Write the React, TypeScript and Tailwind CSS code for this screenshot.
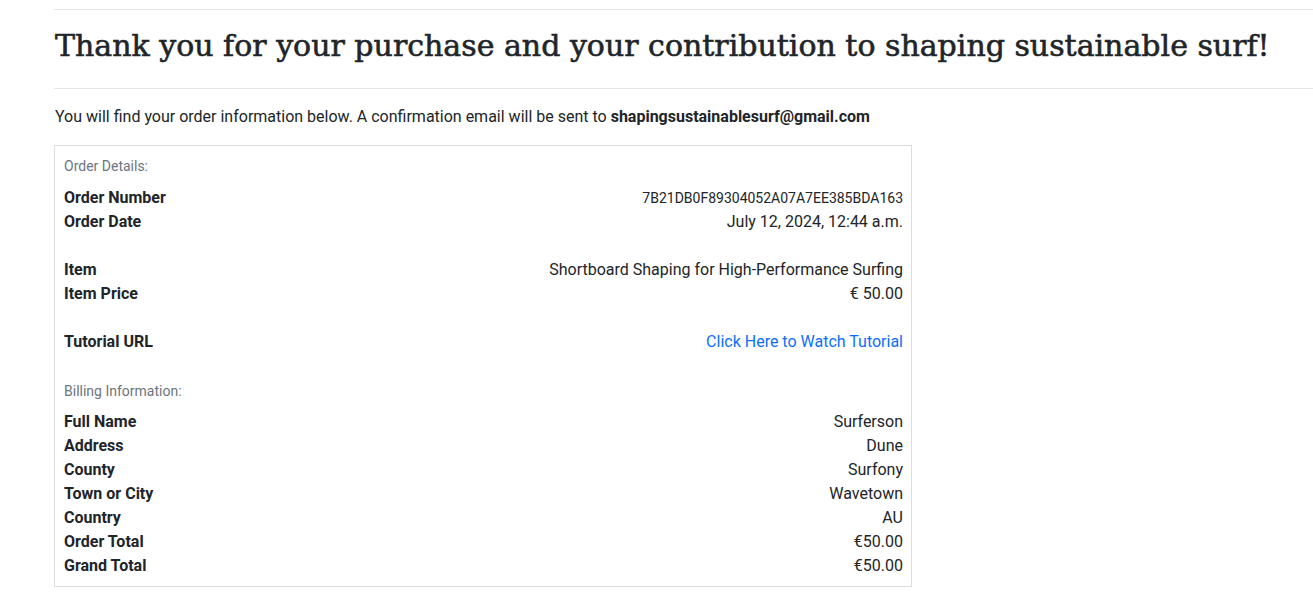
type Row = { label: string; value: string; kind?: "code" | "link" };

const orderRows: (Row | null)[] = [
  { label: "Order Number", value: "7B21DB0F89304052A07A7EE385BDA163", kind: "code" },
  { label: "Order Date", value: "July 12, 2024, 12:44 a.m." },
  null,
  { label: "Item", value: "Shortboard Shaping for High-Performance Surfing" },
  { label: "Item Price", value: "€ 50.00" },
  null,
  { label: "Tutorial URL", value: "Click Here to Watch Tutorial", kind: "link" },
];

const billingRows: Row[] = [
  { label: "Full Name", value: "Surferson" },
  { label: "Address", value: "Dune" },
  { label: "County", value: "Surfony" },
  { label: "Town or City", value: "Wavetown" },
  { label: "Country", value: "AU" },
  { label: "Order Total", value: "€50.00" },
  { label: "Grand Total", value: "€50.00" },
];

function DetailRow({ row }: { row: Row | null }) {
  if (!row) return <div className="h-6" />;
  return (
    <div className="flex justify-between items-center h-6 leading-6">
      <span className="font-bold">{row.label}</span>
      {row.kind === "code" ? (
        <span className="text-[14px]">{row.value}</span>
      ) : row.kind === "link" ? (
        <a href="#" className="text-[#0d6efd]">
          {row.value}
        </a>
      ) : (
        <span>{row.value}</span>
      )}
    </div>
  );
}

export default function App() {
  return (
    <div
      className="min-h-screen bg-white text-[#212529] pl-[54px] overflow-hidden"
      style={{ fontFamily: "Roboto, 'Noto Sans', sans-serif" }}
    >
      <div className="pt-[9px]">
        <div className="border-t border-[#e5e5e5]" />
      </div>
      <h1
        className="h-[78px] pt-[16px] pl-px text-[30px] leading-[40px] font-normal whitespace-nowrap [-webkit-text-stroke:0.6px_#212529]"
        style={{ fontFamily: "'DejaVu Serif', 'Liberation Serif', serif" }}
      >
        Thank you for your purchase and your contribution to shaping sustainable surf!
      </h1>
      <div className="border-t border-[#e5e5e5]" />
      <p className="mt-4 pl-px text-[16px] leading-6">
        You will find your order information below. A confirmation email will be sent to{" "}
        <strong className="font-bold">shapingsustainablesurf@gmail.com</strong>
      </p>
      <div className="mt-4 w-[858px] border border-[#dddddd] pl-[9px] pr-[8px] pt-[10px] pb-[8px] text-[16px]">
        <div className="text-[14px] leading-[21px] text-[#6c757d]">Order Details:</div>
        <div className="mt-[9px]">
          {orderRows.map((r, i) => (
            <DetailRow key={i} row={r} />
          ))}
        </div>
        <div className="mt-[27px] text-[14px] leading-[21px] text-[#6c757d]">Billing Information:</div>
        <div className="mt-2">
          {billingRows.map((r, i) => (
            <DetailRow key={i} row={r} />
          ))}
        </div>
      </div>
    </div>
  );
}
